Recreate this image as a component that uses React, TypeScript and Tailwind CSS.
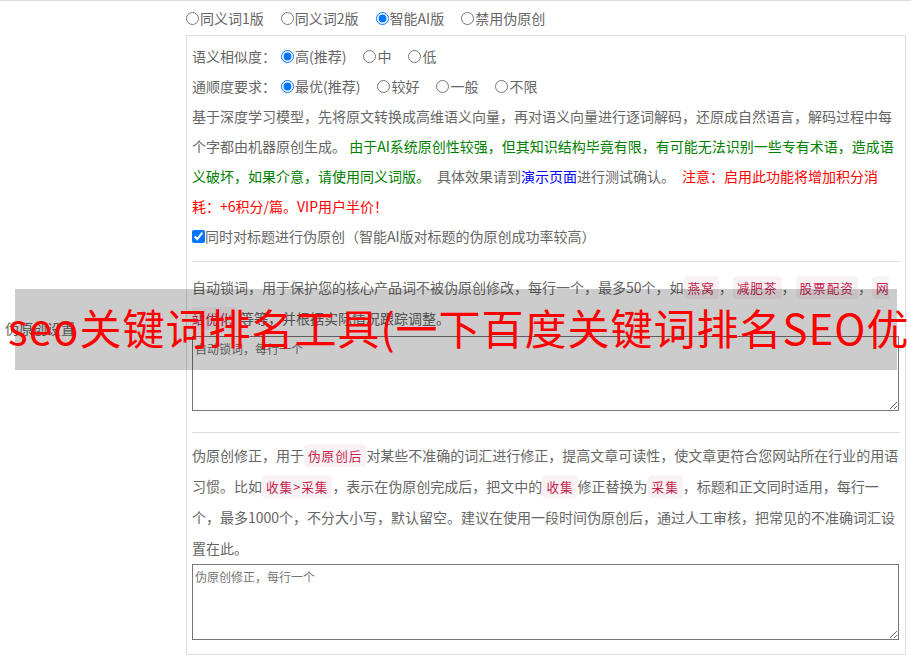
import type { ReactNode } from "react";

const Tag = ({ children }: { children: ReactNode }) => (
  <code className="rounded-[4px] bg-[#f9f2f4] px-[4px] py-[2px] font-['Noto_Sans_CJK_SC',sans-serif] text-[12.6px] tracking-[1px] text-[#c7254e]">
    {children}
  </code>
);

const Radio = ({
  name,
  label,
  checked,
}: {
  name: string;
  label: string;
  checked?: boolean;
}) => (
  <label className="mr-[17px] inline-flex items-center">
    <input
      type="radio"
      name={name}
      defaultChecked={checked}
      className="m-0 mr-[1px] h-[13px] w-[13px]"
    />
    <span>{label}</span>
  </label>
);

export default function App() {
  return (
    <div className="relative h-[658px] w-full overflow-hidden border-t border-[#ddd] bg-white font-['Noto_Sans_CJK_SC',sans-serif] text-[14px] text-[#666]">
      <div className="flex">
        {/* left label cell */}
        <div className="flex w-[186px] shrink-0 items-center pl-[5px]">
          <span>伪原创设置</span>
        </div>

        <div className="w-[720px] shrink-0">
          <div className="flex h-[34px] items-center">
            <Radio name="mode" label="同义词1版" />
            <Radio name="mode" label="同义词2版" />
            <Radio name="mode" label="智能AI版" checked />
            <Radio name="mode" label="禁用伪原创" />
          </div>

          <div className="border border-[#ddd] px-[5px] pb-[14px] pt-[5px]">
            <div className="leading-[30px]">
              <div className="flex items-center">
                <span className="mr-[5px]">语义相似度：</span>
                <Radio name="sim" label="高(推荐)" checked />
                <Radio name="sim" label="中" />
                <Radio name="sim" label="低" />
              </div>
              <div className="flex items-center">
                <span className="mr-[5px]">通顺度要求：</span>
                <Radio name="flu" label="最优(推荐)" checked />
                <Radio name="flu" label="较好" />
                <Radio name="flu" label="一般" />
                <Radio name="flu" label="不限" />
              </div>
              <p>
                基于深度学习模型，先将原文转换成高维语义向量，再对语义向量进行逐词解码，还原成自然语言，解码过程中每个字都由机器原创生成。{" "}
                <span className="text-[#008000]">
                  由于AI系统原创性较强，但其知识结构毕竟有限，有可能无法识别一些专有术语，造成语义破坏，如果介意，请使用同义词版。
                </span>
                {"\u2002"}具体效果请到<a className="text-[#0000ff]">演示页面</a>进行测试确认。{"\u2002"}
                <span className="text-[#ff0000]">
                  注意：启用此功能将增加积分消耗：+6积分/篇。VIP用户半价！
                </span>
              </p>
              <label className="flex items-center">
                <input
                  type="checkbox"
                  defaultChecked
                  className="m-0 h-[13px] w-[13px]"
                />
                <span>同时对标题进行伪原创（智能AI版对标题的伪原创成功率较高）</span>
              </label>
            </div>

            <div className="mb-[10px] mt-[10px] h-px bg-[#ddd]" />

            <p className="leading-[30px]">
              自动锁词，用于保护您的核心产品词不被伪原创修改，每行一个，最多50个，如<Tag>燕窝</Tag>，<Tag>减肥茶</Tag>，<Tag>股票配资</Tag>，<Tag>网站优化</Tag> 等等，并根据实际情况跟踪调整。
            </p>
            <textarea
              placeholder="自动锁词，每行一个"
              className="mt-[2px] block h-[75px] w-[707px] border border-[#767676] px-[2px] py-[3px] text-[12px] leading-[18px] placeholder:text-[#757575]"
            />

            <div className="mb-[7px] mt-[21px] h-px bg-[#ddd]" />

            <p className="leading-[31px]">
              伪原创修正，用于<Tag>伪原创后</Tag>对某些不准确的词汇进行修正，提高文章可读性，使文章更符合您网站所在行业的用语习惯。比如<Tag>收集&gt;采集</Tag>，表示在伪原创完成后，把文中的<Tag>收集</Tag>修正替换为<Tag>采集</Tag>，标题和正文同时适用，每行一个，最多1000个，不分大小写，默认留空。建议在使用一段时间伪原创后，通过人工审核，把常见的不准确词汇设置在此。
            </p>
            <textarea
              placeholder="伪原创修正，每行一个"
              className="block h-[76px] w-[707px] border border-[#767676] px-[2px] py-[3px] text-[12px] leading-[18px] placeholder:text-[#757575]"
            />
          </div>
        </div>
      </div>

      {/* banner overlay */}
      <div className="absolute left-[15px] top-[288px] h-[81px] w-[882px] bg-black/20" />
      <div className="absolute left-[8px] top-[305px] whitespace-nowrap text-[42px] leading-none tracking-[1px] text-[#ff0000]">
        seo关键词排名工具(一下百度关键词排名SEO优
      </div>
    </div>
  );
}
